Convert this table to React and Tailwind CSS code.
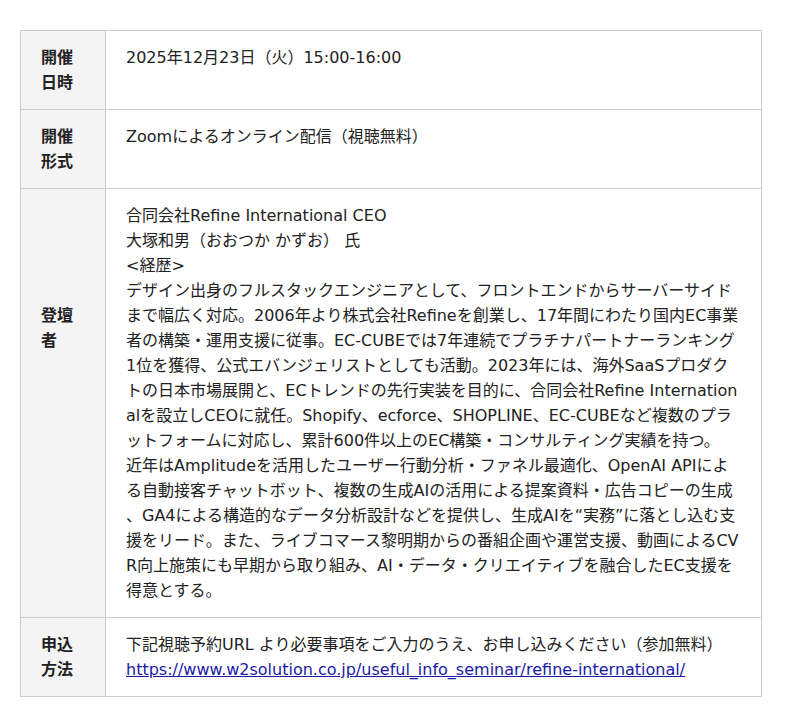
import React from 'react';

const th = 'w-[85px] border border-[#cccccc] bg-[#f4f4f4] px-[20px] py-[14px] text-left align-top font-bold';
const td = 'border border-[#cccccc] px-[20px] py-[14px] text-left align-top break-all [line-break:anywhere]';

export default function App() {
    return (
        <div className="min-h-[727px] w-[800px] bg-white pt-[30px] pl-[20px] text-[16px] leading-[25px] text-[#222222] [font-family:'DejaVu_Sans','Noto_Sans_CJK_JP',sans-serif]">
            <table className="w-[742px] table-fixed border-collapse">
                <tbody>
                    <tr>
                        <th className={th}>開催日時</th>
                        <td className={td}>2025年12月23日（火）15:00-16:00</td>
                    </tr>
                    <tr>
                        <th className={th}>開催形式</th>
                        <td className={td}>Zoomによるオンライン配信（視聴無料）</td>
                    </tr>
                    <tr>
                        <th className={th + ' !pt-[114px]'}>登壇者</th>
                        <td className={td}>
                            合同会社Refine International CEO<br />
                            大塚和男（おおつか かずお） 氏<br />
                            &lt;経歴&gt;<br />
                            デザイン出身のフルスタックエンジニアとして、フロントエンドからサーバーサイドまで幅広く対応。2006年より株式会社Refineを創業し、17年間にわたり国内EC事業者の構築・運用支援に従事。EC-CUBEでは7年連続でプラチナパートナーランキング1位を獲得、公式エバンジェリストとしても活動。2023年には、海外SaaSプロダクトの日本市場展開と、ECトレンドの先行実装を目的に、合同会社Refine Internationalを設立しCEOに就任。Shopify、ecforce、SHOPLINE、EC-CUBEなど複数のプラットフォームに対応し、累計600件以上のEC構築・コンサルティング実績を持つ。<br />
                            近年はAmplitudeを活用したユーザー行動分析・ファネル最適化、OpenAI APIによる自動接客チャットボット、複数の生成AIの活用による提案資料・広告コピーの生成、GA4による構造的なデータ分析設計などを提供し、生成AIを“実務”に落とし込む支援をリード。また、ライブコマース黎明期からの番組企画や運営支援、動画によるCVR向上施策にも早期から取り組み、AI・データ・クリエイティブを融合したEC支援を得意とする。
                        </td>
                    </tr>
                    <tr>
                        <th className={th}>申込方法</th>
                        <td className={td}>
                            下記視聴予約URL より必要事項をご入力のうえ、お申し込みください（参加無料）<br />
                            <a href="#" className="text-[#1a1aa6] underline">https://www.w2solution.co.jp/useful_info_seminar/refine-international/</a>
                        </td>
                    </tr>
                </tbody>
            </table>
        </div>
    );
}
